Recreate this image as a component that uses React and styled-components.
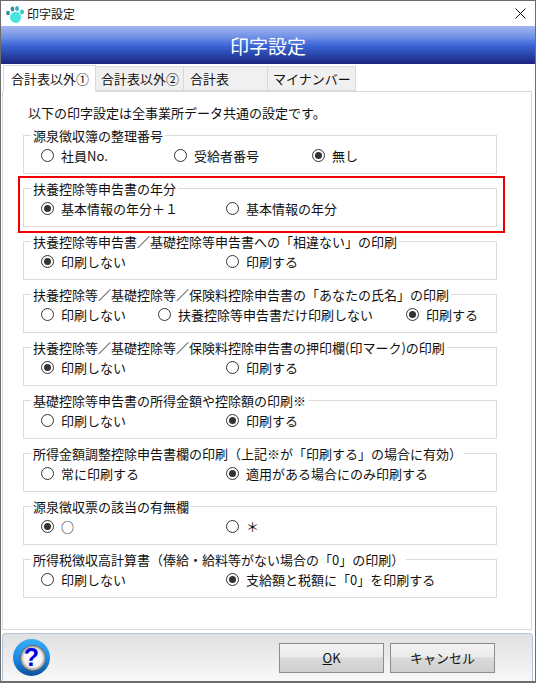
import styled, { createGlobalStyle } from 'styled-components';

const Global = createGlobalStyle`
  html, body { margin: 0; padding: 0; background: #fff; }
  * { box-sizing: border-box; }
`;

const groups = [
  { title: '源泉徴収簿の整理番号', options: [['社員No.', 133], ['受給者番号', 138], ['無し', 100]], checked: 2 },
  { title: '扶養控除等申告書の年分', options: [['基本情報の年分＋１', 185], ['基本情報の年分', 185]], checked: 0, marked: true },
  { title: '扶養控除等申告書／基礎控除等申告書への「相違ない」の印刷', options: [['印刷しない', 185], ['印刷する', 185]], checked: 0 },
  { title: '扶養控除等／基礎控除等／保険料控除申告書の「あなたの氏名」の印刷', options: [['印刷しない', 117], ['扶養控除等申告書だけ印刷しない', 248], ['印刷する', 80]], checked: 2 },
  { title: '扶養控除等／基礎控除等／保険料控除申告書の押印欄(印マーク)の印刷', options: [['印刷しない', 185], ['印刷する', 185]], checked: 0 },
  { title: '基礎控除等申告書の所得金額や控除額の印刷※', options: [['印刷しない', 185], ['印刷する', 185]], checked: 1 },
  { title: '所得金額調整控除申告書欄の印刷（上記※が「印刷する」の場合に有効）', options: [['常に印刷する', 185], ['適用がある場合にのみ印刷する', 250]], checked: 1 },
  { title: '源泉徴収票の該当の有無欄', options: [['○', 185], ['＊', 185]], checked: 0 },
  { title: '所得税徴収高計算書（俸給・給料等がない場合の「0」の印刷）', options: [['印刷しない', 185], ['支給額と税額に「0」を印刷する', 250]], checked: 1 },
];

const tabs = [
  { label: '合計表以外①', width: 93, pad: 7 },
  { label: '合計表以外②', width: 88, pad: 5 },
  { label: '合計表', width: 84, pad: 6 },
  { label: 'マイナンバー', width: 88, pad: 5 },
];

const Win = styled.div`
  width: 536px;
  height: 683px;
  display: flex;
  flex-direction: column;
  border: 1px solid #6d6d6d;
  border-bottom-width: 2px;
  background: #fff;
  font-family: "Noto Sans CJK JP", "Liberation Sans", sans-serif;
  font-size: 13px;
  color: #111;
`;

const TitleBar = styled.div`
  height: 25px;
  display: flex;
  align-items: center;
  padding-left: 4px;
  gap: 1px;
  font-size: 12px;
`;

const TitleText = styled.span`
  flex: 1;
`;

const Close = styled.div`
  width: 30px;
  display: flex;
  justify-content: center;
`;

const Header = styled.div`
  height: 38px;
  flex: none;
  display: flex;
  align-items: center;
  justify-content: center;
  color: #fff;
  font-size: 19px;
  background: linear-gradient(#a3b6ee 0%, #6f8fe6 30%, #3d68d8 50%, #2a4bb0 72%, #1c2480 100%);
`;

const TabBar = styled.div`
  height: 27px;
  flex: none;
  display: flex;
  align-items: flex-end;
  padding-left: 2px;
  position: relative;
  z-index: 1;
`;

const Tab = styled.div`
  height: ${p => (p.$active ? '27px' : '25px')};
  width: ${p => p.$width}px;
  padding-left: ${p => p.$pad}px;
  margin-bottom: ${p => (p.$active ? '-1px' : '0')};
  display: flex;
  align-items: center;
  background: ${p => (p.$active ? '#fff' : '#f0f0f0')};
  border: 1px solid #d9d9d9;
  border-left-width: ${p => (p.$active ? '1px' : '0')};
  border-bottom-color: ${p => (p.$active ? '#fff' : '#d9d9d9')};
`;

const Panel = styled.div`
  flex: 1;
  margin: 0 0 0 1px;
  width: 530px;
  border: 1px solid #d9d9d9;
  padding: 11px 34px 0 20px;
  display: flex;
  flex-direction: column;
`;

const Note = styled.div`
  line-height: 19px;
  padding-left: 5px;
  margin-bottom: 4px;
`;

const Groups = styled.div`
  display: flex;
  flex-direction: column;
`;

const GroupWrap = styled.div`
  position: relative;
  height: 53px;
  ${p => p.$marked && `
    &::after {
      content: '';
      position: absolute;
      left: -5px;
      right: -8px;
      top: -3px;
      bottom: -1px;
      border: 2px solid #f00000;
      pointer-events: none;
    }
  `}
`;

const Group = styled.fieldset`
  height: 48px;
  margin: 0;
  padding: 0;
  border: 1px solid #dcdcdc;
  min-width: 0;
`;

const Legend = styled.legend`
  margin-left: 7px;
  padding: 2px 2px 0;
  line-height: 16px;
`;

const Row = styled.div`
  display: flex;
  height: 20px;
  margin-top: 1px;
  padding-left: 17px;
  align-items: center;
`;

const Option = styled.label`
  display: flex;
  align-items: center;
  gap: 7px;
  width: ${p => p.$width}px;
  flex: none;
  white-space: nowrap;
`;

const Dot = styled.span`
  width: 13px;
  height: 13px;
  flex: none;
  border-radius: 50%;
  border: 1px solid #333;
  background: #fff;
  display: flex;
  align-items: center;
  justify-content: center;
  &::after {
    content: '';
    width: 7px;
    height: 7px;
    border-radius: 50%;
    background: ${p => (p.$on ? '#333' : 'transparent')};
  }
`;

const Footer = styled.div`
  height: 48px;
  width: 531px;
  flex: none;
  margin: 3px 0 0 1px;
  border: 1px solid #b4c4d8;
  border-bottom: 0;
  border-radius: 4px 4px 0 0;
  background: linear-gradient(#e0e0e0, #f8f8f8);
  display: flex;
  align-items: center;
  padding: 0 37px 0 10px;
`;

const Help = styled.div`
  width: 37px;
  height: 37px;
  margin-right: auto;
  border-radius: 50%;
  background: radial-gradient(circle 13px at 20px 19px, #fff 0, #f4f4f4 70%, #b0b0b0 88%, #666 98%, transparent 100%),
    linear-gradient(#38b0f6, #1888e4 55%, #0a4f98);
  display: flex;
  align-items: center;
  justify-content: center;
  color: #0000e0;
  font-family: "Liberation Sans", sans-serif;
  font-weight: 700;
  font-size: 25px;
`;

const Button = styled.div`
  width: 105px;
  height: 30px;
  margin-left: 6px;
  border: 1px solid #8c8c8c;
  background: linear-gradient(#f3f3f3 0%, #ebebeb 45%, #dadada 50%, #cfcfcf 100%);
  display: flex;
  align-items: center;
  justify-content: center;
`;

const Accel = styled.span`
  text-decoration: underline;
`;

const Paw = () => (
  <svg width="21" height="20" viewBox="0 0 21 20">
    <ellipse cx="3" cy="9" rx="1.9" ry="2.3" fill="#2b8fa8" />
    <ellipse cx="7.5" cy="5" rx="1.9" ry="2.6" fill="#2b8fa8" />
    <ellipse cx="12" cy="4.5" rx="1.9" ry="2.6" fill="#35b0c0" />
    <ellipse cx="17" cy="8" rx="2" ry="2.4" fill="#35c8d0" />
    <path d="M5 13c0-3 3-5 6-5s5 2 5 5-2 6-5 6-6-3-6-6z" fill="#45e4e0" />
  </svg>
);

const X = () => (
  <svg width="11" height="11" viewBox="0 0 11 11">
    <path d="M.5.5l10 10M10.5.5l-10 10" stroke="#111" strokeWidth="1" fill="none" />
  </svg>
);

export default function App() {
  return (
    <Win>
      <Global />
      <TitleBar>
        <Paw />
        <TitleText>印字設定</TitleText>
        <Close><X /></Close>
      </TitleBar>
      <Header>印字設定</Header>
      <TabBar>
        {tabs.map((t, i) => (
          <Tab key={t.label} $active={i === 0} $width={t.width} $pad={t.pad}>{t.label}</Tab>
        ))}
      </TabBar>
      <Panel>
        <Note>以下の印字設定は全事業所データ共通の設定です。</Note>
        <Groups>
          {groups.map(g => (
            <GroupWrap key={g.title} $marked={g.marked}>
              <Group>
                <Legend>{g.title}</Legend>
                <Row>
                  {g.options.map(([label, w], i) => (
                    <Option key={label} $width={w}>
                      <Dot $on={i === g.checked} />
                      {label}
                    </Option>
                  ))}
                </Row>
              </Group>
            </GroupWrap>
          ))}
        </Groups>
      </Panel>
      <Footer>
        <Help>?</Help>
        <Button><span><Accel>O</Accel>K</span></Button>
        <Button>キャンセル</Button>
      </Footer>
    </Win>
  );
}
